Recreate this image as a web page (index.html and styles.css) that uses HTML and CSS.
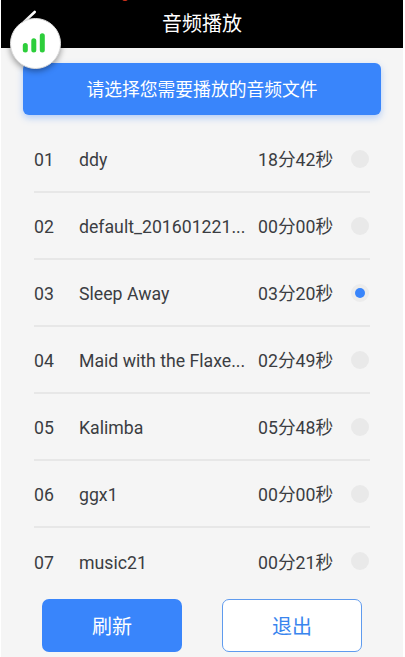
FILE: index.html
```html
<!DOCTYPE html>
<html lang="zh-CN">
<head>
<meta charset="utf-8">
<title>音频播放</title>
<link rel="stylesheet" href="styles.css">
</head>
<body>
<main class="screen">
  <header class="topbar">
    <svg class="back" width="16" height="24" viewBox="0 0 16 24"><path d="M13.700 2 3.500 11.500l10 10" fill="none" stroke="#fff" stroke-width="2.6" stroke-linecap="round"/></svg>
    <h1 class="title">音频播放</h1>
    <span class="record"></span>
    <div class="signal">
      <svg width="24" height="22" viewBox="0 0 24 22"><path d="M3.300 12.500v4.500M11.800 7.800v9.200M20.300 2.800v14.200" fill="none" stroke="#2dce3b" stroke-width="5" stroke-linecap="round"/></svg>
    </div>
  </header>
  <div class="banner">请选择您需要播放的音频文件</div>
  <ul class="list">
    <li class="row"><span class="num">01</span><span class="name">ddy</span><span class="time">18分42秒</span><i class="radio"></i></li>
    <li class="row"><span class="num">02</span><span class="name">default_201601221...</span><span class="time">00分00秒</span><i class="radio"></i></li>
    <li class="row"><span class="num">03</span><span class="name">Sleep Away</span><span class="time">03分20秒</span><i class="radio checked"></i></li>
    <li class="row"><span class="num">04</span><span class="name">Maid with the Flaxe...</span><span class="time">02分49秒</span><i class="radio"></i></li>
    <li class="row"><span class="num">05</span><span class="name">Kalimba</span><span class="time">05分48秒</span><i class="radio"></i></li>
    <li class="row"><span class="num">06</span><span class="name">ggx1</span><span class="time">00分00秒</span><i class="radio"></i></li>
    <li class="row"><span class="num">07</span><span class="name">music21</span><span class="time">00分21秒</span><i class="radio"></i></li>
  </ul>
  <footer class="actions">
    <button class="btn primary">刷新</button>
    <button class="btn outline">退出</button>
  </footer>
</main>
</body>
</html>
```
FILE: styles.css
```css
* { box-sizing: border-box; }
body {
  margin: 0;
  background: #fff;
  font-family: Roboto, "Noto Sans CJK SC", sans-serif;
  color: #3b3d42;
}
.screen {
  width: 402px;
  height: 657px;
  margin-left: 1px;
  background: #f5f5f5;
  overflow: hidden;
}
.topbar {
  position: relative;
  height: 48px;
  background: #000;
  display: flex;
  justify-content: center;
}
.title {
  margin: 0;
  font-size: 20px;
  font-weight: 400;
  line-height: 48px;
  color: #fff;
}
.back { position: absolute; left: 20px; top: 10px; }
.record {
  position: absolute;
  left: 121px;
  top: -4px;
  width: 6px;
  height: 5px;
  border-radius: 50%;
  background: #d8321c;
}
.signal {
  position: absolute;
  left: 9px;
  top: 18px;
  width: 51px;
  height: 51px;
  border-radius: 50%;
  background: #fff;
  border: 1px solid #dcdcdc;
  box-shadow: 0 2px 6px rgba(0, 0, 0, 0.4);
  display: flex;
  align-items: center;
  justify-content: center;
  padding-right: 3px;
}
.banner {
  margin: 15px 22px 0;
  height: 52px;
  border-radius: 6px;
  background: #3985fb;
  box-shadow: 0 3px 7px rgba(57, 133, 251, 0.35);
  color: #fff;
  font-size: 17.8px;
  line-height: 54px;
  text-align: center;
}
.list {
  list-style: none;
  margin: 10px 33px 0;
  padding: 0;
}
.row {
  display: flex;
  align-items: center;
  height: 67.1px;
  padding-top: 2px;
  border-bottom: 2px solid #e7e7e7;
  font-size: 17.7px;
  line-height: 26px;
  white-space: nowrap;
}
.row:first-child { height: 68px; padding-top: 3px; }
.row:last-child { border-bottom-color: transparent; }
.num { width: 45px; }
.name { width: 179px; }
.num, .name, .time { padding-top: 1px; }
.time { width: 93px; }
.radio {
  width: 18px;
  height: 18px;
  margin-bottom: 2px;
  border-radius: 50%;
  background: #e9e9e9;
  display: flex;
  align-items: center;
  justify-content: center;
}
.radio.checked { background: #ececec; }
.radio.checked::after {
  content: "";
  width: 10px;
  height: 10px;
  border-radius: 50%;
  background: #3985fb;
}
.actions {
  display: flex;
  gap: 40px;
  margin: 3px 0 0 41px;
}
.btn {
  width: 140px;
  height: 53px;
  padding: 2px 0 0;
  border: 0;
  border-radius: 7px;
  font: 400 20px/53px Roboto, "Noto Sans CJK SC", sans-serif;
}
.primary { background: #3985fb; color: #fff; }
.outline {
  background: #fff;
  color: #3985ee;
  border: 1px solid #5f9bee;
  line-height: 51px;
}
```
